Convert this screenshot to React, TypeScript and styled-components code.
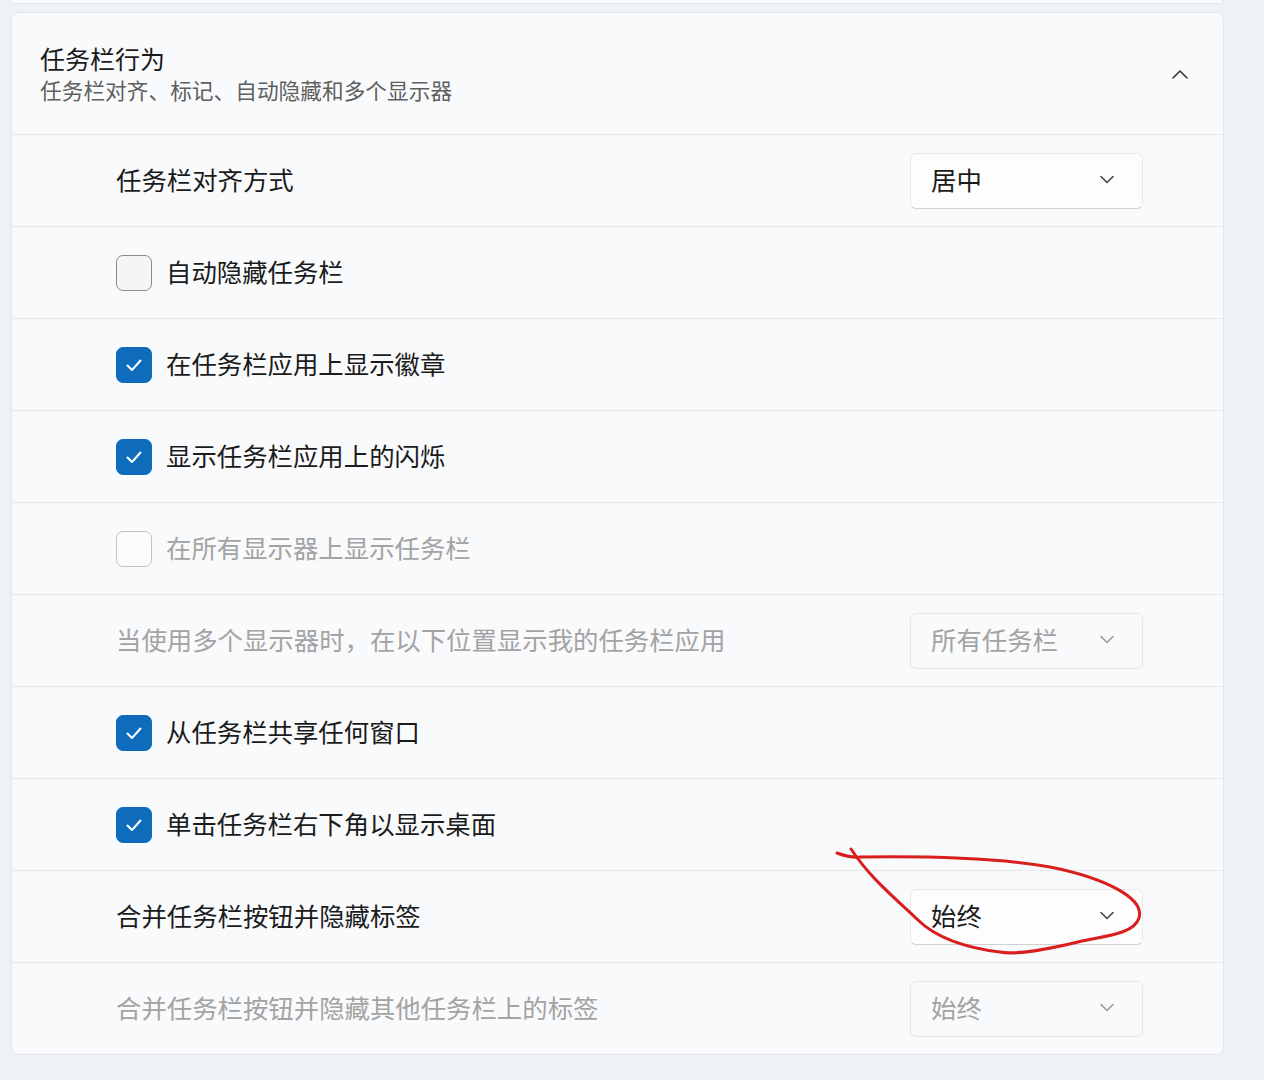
import React from 'react';
import styled, { createGlobalStyle } from 'styled-components';

const GlobalStyle = createGlobalStyle`
  html, body {
    margin: 0;
    padding: 0;
    background: #eef1f5;
    font-family: "Noto Sans CJK SC", "Noto Sans", sans-serif;
  }
`;

const Page = styled.div`
  position: relative;
  width: 1264px;
  height: 1080px;
  padding-left: 11px;
  box-sizing: border-box;
  overflow: hidden;
`;

const PrevCard = styled.div`
  width: 1212px;
  height: 3px;
  margin-left: -1px;
  background: #fafbfc;
  border: 1px solid #e3e5e8;
  border-top: none;
  border-radius: 0 0 8px 8px;
`;

const Card = styled.div`
  margin-top: 8px;
  width: 1213px;
  background: #f9fafc;
  border: 1px solid #e4e6e9;
  border-radius: 8px;
  box-sizing: border-box;
`;

const Header = styled.div`
  height: 121px;
  display: flex;
  align-items: center;
  justify-content: space-between;
  padding: 0 34px 0 28px;
`;

const HeaderText = styled.div`
  display: flex;
  flex-direction: column;
  margin-top: -1px;
`;

const Title = styled.div`
  font-size: 25px;
  line-height: 32px;
  color: #1b1b1b;
`;

const Subtitle = styled.div`
  font-size: 21.7px;
  line-height: 31px;
  color: #5f5f5f;
`;

const Row = styled.div`
  height: 91px;
  border-top: 1px solid #e5e7ea;
  display: flex;
  align-items: center;
  justify-content: space-between;
  padding: 0 80px 3px 104px;
  box-sizing: border-box;
  height: 92px;
`;

const Left = styled.div`
  display: flex;
  align-items: center;
  gap: 14px;
`;

const Label = styled.span<{ $disabled?: boolean }>`
  font-size: 25.4px;
  color: ${p => (p.$disabled ? '#a3a3a3' : '#1b1b1b')};
`;

const Box = styled.span<{ $checked?: boolean; $disabled?: boolean }>`
  width: 36px;
  height: 36px;
  margin-top: 3px;
  box-sizing: border-box;
  border-radius: 7px;
  display: flex;
  align-items: center;
  justify-content: center;
  background: ${p => (p.$checked ? '#0f6cbd' : p.$disabled ? '#fbfbfc' : '#f4f5f6')};
  border: ${p =>
    p.$checked ? '1px solid #0f6cbd' : p.$disabled ? '1.5px solid #c2c2c2' : '1.5px solid #8b8b8b'};
`;

const Select = styled.div<{ $disabled?: boolean }>`
  width: 233px;
  height: 56px;
  margin-top: 3px;
  box-sizing: border-box;
  border-radius: 6px;
  display: flex;
  align-items: center;
  justify-content: space-between;
  padding: 0 26px 3px 20px;
  font-size: 25.4px;
  background: ${p => (p.$disabled ? '#f9fafb' : '#fdfdfd')};
  color: ${p => (p.$disabled ? '#a3a3a3' : '#1b1b1b')};
  border: 1px solid #e6e7e9;
  border-bottom-color: ${p => (p.$disabled ? '#e6e7e9' : '#cfd0d2')};
`;

const Annotation = styled.svg`
  position: absolute;
  left: 0;
  top: 0;
  pointer-events: none;
`;

const Check = () => (
  <svg width="20" height="20" viewBox="0 0 20 20">
    <path d="M3.5 10.5 L8 15 L16.5 5.5" fill="none" stroke="#fff" strokeWidth="2" strokeLinecap="round" strokeLinejoin="round" />
  </svg>
);

const Chevron = ({ up, color }: { up?: boolean; color: string }) => (
  <svg width="18" height="18" viewBox="0 0 18 18">
    <path
      d={up ? 'M2 13 L9 6 L16 13' : 'M3 6.5 L9 12.5 L15 6.5'}
      fill="none"
      stroke={color}
      strokeWidth="1.6"
      strokeLinecap="round"
      strokeLinejoin="round"
    />
  </svg>
);

type Item =
  | { kind: 'check'; label: string; checked?: boolean; disabled?: boolean }
  | { kind: 'select'; label: string; value: string; disabled?: boolean };

const items: Item[] = [
  { kind: 'select', label: '任务栏对齐方式', value: '居中' },
  { kind: 'check', label: '自动隐藏任务栏' },
  { kind: 'check', label: '在任务栏应用上显示徽章', checked: true },
  { kind: 'check', label: '显示任务栏应用上的闪烁', checked: true },
  { kind: 'check', label: '在所有显示器上显示任务栏', disabled: true },
  { kind: 'select', label: '当使用多个显示器时，在以下位置显示我的任务栏应用', value: '所有任务栏', disabled: true },
  { kind: 'check', label: '从任务栏共享任何窗口', checked: true },
  { kind: 'check', label: '单击任务栏右下角以显示桌面', checked: true },
  { kind: 'select', label: '合并任务栏按钮并隐藏标签', value: '始终' },
  { kind: 'select', label: '合并任务栏按钮并隐藏其他任务栏上的标签', value: '始终', disabled: true },
];

export default function App() {
  return (
    <Page>
      <GlobalStyle />
      <PrevCard />
      <Card>
        <Header>
          <HeaderText>
            <Title>任务栏行为</Title>
            <Subtitle>任务栏对齐、标记、自动隐藏和多个显示器</Subtitle>
          </HeaderText>
          <Chevron up color="#333" />
        </Header>
        {items.map((it, i) =>
          it.kind === 'check' ? (
            <Row key={i}>
              <Left>
                <Box $checked={it.checked} $disabled={it.disabled}>
                  {it.checked && <Check />}
                </Box>
                <Label $disabled={it.disabled}>{it.label}</Label>
              </Left>
            </Row>
          ) : (
            <Row key={i}>
              <Label $disabled={it.disabled}>{it.label}</Label>
              <Select $disabled={it.disabled}>
                <span>{it.value}</span>
                <Chevron color={it.disabled ? '#9a9a9a' : '#444'} />
              </Select>
            </Row>
          )
        )}
      </Card>
      <Annotation width="1264" height="1080" viewBox="0 0 1264 1080">
        <path
          d="M837 853 C845 856, 852 858, 860 857 C930 856, 1000 858, 1050 867 C1105 878, 1145 898, 1139 918 C1134 934, 1105 936, 1082 941 C1050 949, 1015 955, 1000 952 C965 948, 935 937, 918 920 C895 898, 870 878, 851 849"
          fill="none"
          stroke="#d91e1e"
          strokeWidth="3"
          strokeLinecap="round"
          strokeLinejoin="round"
        />
      </Annotation>
    </Page>
  );
}
